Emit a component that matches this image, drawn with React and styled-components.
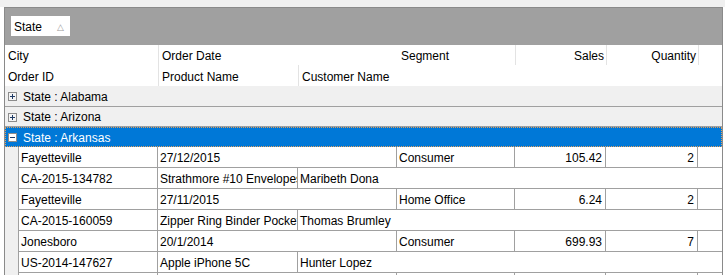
import React from 'react'
import styled, { createGlobalStyle } from 'styled-components'

const Global = createGlobalStyle`
body {
  margin: 0;
  background: #ffffff;
  font-family: "Liberation Sans", Arial, sans-serif;
  font-size: 12px;
  color: #000;
  overflow: hidden;
}
`

const TopStrip = styled.div`
height: 7px;
background: #f0f0f0;
`

const Frame = styled.div`
margin-left: 4px;
width: 719px;
box-sizing: border-box;
border: 1px solid #8a8a8a;
border-bottom: none;
height: 268px;
overflow: hidden;
background: #fff;
`

const GroupPanel = styled.div`
height: 37px;
background: #a0a0a0;
padding: 8px 0 0 6px;
box-sizing: border-box;
`

const Chip = styled.div`
width: 59px;
height: 20px;
background: #fff;
display: flex;
align-items: center;
justify-content: space-between;
padding: 1px 6px 0 3px;
box-sizing: border-box;
`

const SortMark = styled.span`
color: #9a9a9a;
font-size: 9px;
`

const HeaderRow = styled.div`
display: grid;
grid-template-columns: ${({cols}) => cols};
height: ${({h}) => h}px;
background: #fff;
`

const HeadCell = styled.div`
display: flex;
align-items: center;
justify-content: ${({right}) => right ? 'flex-end' : 'flex-start'};
padding: 2px ${({right}) => right ? '2px' : '0'} 0 3px;
border-right: ${({sep}) => sep ? '1px solid #e3e3e3' : 'none'};
white-space: nowrap;
overflow: hidden;
`

const GroupRow = styled.div`
display: flex;
align-items: center;
gap: 6px;
padding: 1px 0 0 3px;
box-sizing: border-box;
background: ${({selected}) => selected ? '#0078d7' : '#f0f0f0'};
color: ${({selected}) => selected ? '#fff' : '#000'};
border-bottom: ${({selected}) => selected ? 'none' : '1px solid #a0a0a0'};
outline: ${({selected}) => selected ? '1px dotted #e0a060' : 'none'};
outline-offset: -1px;
height: ${({h}) => h}px;
`

const DataRow = styled.div`
display: grid;
grid-template-columns: 14px ${({cols}) => cols};
height: 21px;
`

const Indent = styled.div`
background: #f0f0f0;
border-right: 1px solid #a0a0a0;
`

const Cell = styled.div`
display: flex;
align-items: center;
justify-content: ${({right}) => right ? 'flex-end' : 'flex-start'};
padding: 1px ${({right}) => right ? '3px' : '0'} 0 2px;
border-right: ${({last}) => last ? 'none' : '1px solid #a0a0a0'};
border-bottom: 1px solid #a0a0a0;
white-space: nowrap;
overflow: hidden;
`

const Toggle = ({open, selected}) => (
  <svg width="9" height="9" viewBox="0 0 9 9">
    <rect x="0.5" y="0.5" width="8" height="8" fill={selected ? '#fff' : '#f4f4f4'} stroke="#8c8c8c" />
    <line x1="2" y1="4.5" x2="7" y2="4.5" stroke="#1e3a64" />
    {!open && <line x1="4.5" y1="2" x2="4.5" y2="7" stroke="#1e3a64" />}
  </svg>
)

const topCols = '139px 239px 118px 91px 92px 1fr'
const subCols = '139px 140px 1fr'

const orders = [
  { city: 'Fayetteville', date: '27/12/2015', segment: 'Consumer', sales: '105.42', qty: '2', id: 'CA-2015-134782', product: 'Strathmore #10 Envelopes', customer: 'Maribeth Dona' },
  { city: 'Fayetteville', date: '27/11/2015', segment: 'Home Office', sales: '6.24', qty: '2', id: 'CA-2015-160059', product: 'Zipper Ring Binder Pockets', customer: 'Thomas Brumley' },
  { city: 'Jonesboro', date: '20/1/2014', segment: 'Consumer', sales: '699.93', qty: '7', id: 'US-2014-147627', product: 'Apple iPhone 5C', customer: 'Hunter Lopez' },
  { city: '', date: '', segment: '', sales: '', qty: '', id: '', product: '', customer: '' },
]

const App = () => {
  return (
    <>
      <Global />
      <TopStrip />
      <Frame>
        <GroupPanel>
          <Chip>State<SortMark>△</SortMark></Chip>
        </GroupPanel>
        <HeaderRow cols="154px 239px 118px 91px 92px 1fr" h={20}>
          <HeadCell sep>City</HeadCell>
          <HeadCell>Order Date</HeadCell>
          <HeadCell sep>Segment</HeadCell>
          <HeadCell sep right>Sales</HeadCell>
          <HeadCell sep right>Quantity</HeadCell>
          <HeadCell />
        </HeaderRow>
        <HeaderRow cols="154px 140px 1fr" h={21}>
          <HeadCell sep>Order ID</HeadCell>
          <HeadCell sep>Product Name</HeadCell>
          <HeadCell>Customer Name</HeadCell>
        </HeaderRow>
        <GroupRow h={21}><Toggle />State : Alabama</GroupRow>
        <GroupRow h={20}><Toggle />State : Arizona</GroupRow>
        <GroupRow selected h={20}><Toggle open selected />State : Arkansas</GroupRow>
        {orders.map((o, i) => (
          <React.Fragment key={i}>
            <DataRow cols={topCols}>
              <Indent />
              <Cell>{o.city}</Cell>
              <Cell>{o.date}</Cell>
              <Cell>{o.segment}</Cell>
              <Cell right>{o.sales}</Cell>
              <Cell right>{o.qty}</Cell>
              <Cell last />
            </DataRow>
            <DataRow cols={subCols}>
              <Indent />
              <Cell>{o.id}</Cell>
              <Cell>{o.product}</Cell>
              <Cell last>{o.customer}</Cell>
            </DataRow>
          </React.Fragment>
        ))}
      </Frame>
    </>
  )
}

export default App
